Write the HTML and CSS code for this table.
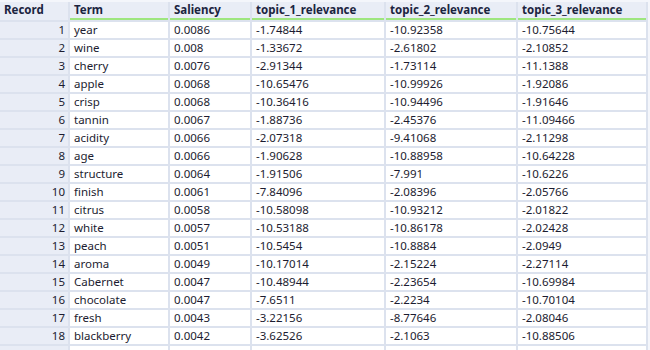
FILE: index.html
```html
<!DOCTYPE html>
<html>
<head>
<meta charset="utf-8">
<link rel="stylesheet" href="styles.css">
</head>
<body>
<div class="page">
<div class="grid">
  <div class="h rec">Record</div><div class="h col">Term</div><div class="h col">Saliency</div><div class="h col">topic_1_relevance</div><div class="h col">topic_2_relevance</div><div class="h col">topic_3_relevance</div>

  <div class="num">1</div><div class="c">year</div><div class="c">0.0086</div><div class="c">-1.74844</div><div class="c">-10.92358</div><div class="c">-10.75644</div>
  <div class="num">2</div><div class="c">wine</div><div class="c">0.008</div><div class="c">-1.33672</div><div class="c">-2.61802</div><div class="c">-2.10852</div>
  <div class="num">3</div><div class="c">cherry</div><div class="c">0.0076</div><div class="c">-2.91344</div><div class="c">-1.73114</div><div class="c">-11.1388</div>
  <div class="num">4</div><div class="c">apple</div><div class="c">0.0068</div><div class="c">-10.65476</div><div class="c">-10.99926</div><div class="c">-1.92086</div>
  <div class="num">5</div><div class="c">crisp</div><div class="c">0.0068</div><div class="c">-10.36416</div><div class="c">-10.94496</div><div class="c">-1.91646</div>
  <div class="num">6</div><div class="c">tannin</div><div class="c">0.0067</div><div class="c">-1.88736</div><div class="c">-2.45376</div><div class="c">-11.09466</div>
  <div class="num">7</div><div class="c">acidity</div><div class="c">0.0066</div><div class="c">-2.07318</div><div class="c">-9.41068</div><div class="c">-2.11298</div>
  <div class="num">8</div><div class="c">age</div><div class="c">0.0066</div><div class="c">-1.90628</div><div class="c">-10.88958</div><div class="c">-10.64228</div>
  <div class="num">9</div><div class="c">structure</div><div class="c">0.0064</div><div class="c">-1.91506</div><div class="c">-7.991</div><div class="c">-10.6226</div>
  <div class="num">10</div><div class="c">finish</div><div class="c">0.0061</div><div class="c">-7.84096</div><div class="c">-2.08396</div><div class="c">-2.05766</div>
  <div class="num">11</div><div class="c">citrus</div><div class="c">0.0058</div><div class="c">-10.58098</div><div class="c">-10.93212</div><div class="c">-2.01822</div>
  <div class="num">12</div><div class="c">white</div><div class="c">0.0057</div><div class="c">-10.53188</div><div class="c">-10.86178</div><div class="c">-2.02428</div>
  <div class="num">13</div><div class="c">peach</div><div class="c">0.0051</div><div class="c">-10.5454</div><div class="c">-10.8884</div><div class="c">-2.0949</div>
  <div class="num">14</div><div class="c">aroma</div><div class="c">0.0049</div><div class="c">-10.17014</div><div class="c">-2.15224</div><div class="c">-2.27114</div>
  <div class="num">15</div><div class="c">Cabernet</div><div class="c">0.0047</div><div class="c">-10.48944</div><div class="c">-2.23654</div><div class="c">-10.69984</div>
  <div class="num">16</div><div class="c">chocolate</div><div class="c">0.0047</div><div class="c">-7.6511</div><div class="c">-2.2234</div><div class="c">-10.70104</div>
  <div class="num">17</div><div class="c">fresh</div><div class="c">0.0043</div><div class="c">-3.22156</div><div class="c">-8.77646</div><div class="c">-2.08046</div>
  <div class="num">18</div><div class="c">blackberry</div><div class="c">0.0042</div><div class="c">-3.62526</div><div class="c">-2.1063</div><div class="c">-10.88506</div>
  <div class="num"></div><div class="c"></div><div class="c"></div><div class="c"></div><div class="c"></div><div class="c"></div>
</div>
</div>
</body>
</html>
```

FILE: styles.css
```css
html, body {
  margin: 0;
  padding: 0;
  background: #ffffff;
  overflow: hidden;
}
.page {
  width: 650px;
  height: 350px;
  overflow: hidden;
  background: #f4f6fb;
  padding-top: 2px;
  box-sizing: border-box;
}
.grid {
  display: grid;
  grid-template-columns: 68px 98px 80px 132px 130px 128px;
  grid-auto-rows: 16px;
  grid-template-rows: 18px;
  gap: 2px;
  width: 648px;
  padding-right: 2px;
  box-sizing: border-box;
  background: #dce2ee;
  font-family: "Noto Sans", "Open Sans", sans-serif;
  font-size: 11.5px;
  color: #1c1c30;
}
.grid > div {
  line-height: 16px;
  white-space: nowrap;
  overflow: hidden;
}
.h {
  background: #e9edf6;
  font-weight: bold;
  color: #1b2440;
  padding-left: 4px;
  box-sizing: border-box;
}
.h.col {
  border-bottom: 2px solid #9ee67f;
}
.num {
  background: #e9edf6;
  text-align: right;
  padding-right: 3px;
}
.c {
  background: #ffffff;
  padding-left: 4px;
}
```
